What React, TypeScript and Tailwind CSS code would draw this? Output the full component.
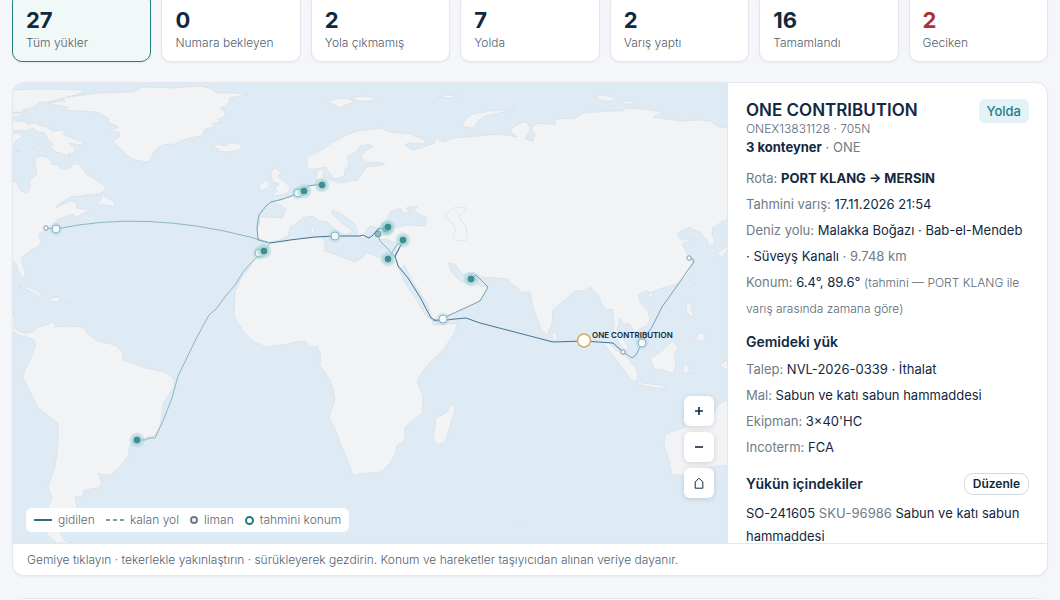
import type { ReactNode } from "react";

const stats = [
  { value: 27, label: "Tüm yükler", active: true },
  { value: 0, label: "Numara bekleyen" },
  { value: 2, label: "Yola çıkmamış" },
  { value: 7, label: "Yolda" },
  { value: 2, label: "Varış yaptı" },
  { value: 16, label: "Tamamlandı" },
  { value: 2, label: "Geciken", late: true },
];

const land = [
  // Arctic Canada
  "12,90 40,89 85,90 78,94 67,97 58,99 52,101 38,103 34,107 22,110 27,112 12,112",
  "12,114 20,113 25,115 12,117",
  "12,119 18,122 25,121 27,124 38,123 40,126 47,127 52,131 66,130 63,134 72,138 83,142 82,145 74,144 69,143 75,149 74,154 68,153 70,156 63,154 57,152 50,148 53,144 48,139 44,133 37,132 34,128 26,131 22,130 12,131",
  "12,133 20,133 22,137 16,141 12,149",
  "37,138 42,138 40,141",
  "33,148 44,148 41,151",
  "12,150 20,151 12,152",
  // North America
  "12,182 17,182 20,190 27,193 31,186 29,180 34,177 37,173 35,164 35,158 41,156 50,158 52,164 58,165 60,168 67,170 73,165 78,163 84,170 87,175 95,179 106,187 105,191 98,194 85,195 78,197 72,196 67,199 59,204 55,208 64,204 71,201 76,202 77,208 82,209 90,209 85,213 76,217 73,214 65,217 58,219 54,225 50,228 44,231 39,234 41,242 38,247 31,250 22,257 22,263 25,272 25,278 22,277 18,270 17,264 12,260",
  "104,193 106,198 112,200 115,203 114,208 109,205 97,205 100,201",
  "18,286 28,287 35,290 43,295 38,296 33,292",
  "50,298 57,297 62,300 56,302 51,301",
  "67,301 71,301 71,303 67,302",
  // Greenland
  "48,104 60,101 65,102 63,98 97,93 133,92 143,87 175,88 200,86 212,89 217,93 235,93 248,94 230,98 229,102 226,106 220,108 225,112 224,117 217,119 222,122 212,123 215,127 205,129 203,135 195,137 182,140 175,144 163,145 157,148 153,153 151,159 147,162 140,161 132,159 127,155 120,148 117,146 113,141 120,136 119,132 110,131 118,127 115,125 107,123 109,120 108,118 97,112 80,111 63,110 68,107",
  "212,147 217,144 225,146 230,143 238,143 243,147 238,150 228,152 216,151 219,149",
  // Eurasia and Africa
  "268,242 262,240 258,238 257,230 260,222 259,217 267,217 282,218 286,210 281,205 271,202 282,200 284,196 290,197 298,192 305,189 308,186 316,184 317,172 322,168 324,177 330,180 340,183 350,181 357,180 362,174 366,167 383,165 385,163 366,162 361,157 366,150 373,147 370,144 360,146 357,151 347,157 349,164 345,170 344,176 335,179 331,176 326,167 320,168 310,170 307,166 307,157 320,151 330,144 345,136 357,131 380,128 390,132 410,134 425,140 424,144 408,143 405,145 412,150 420,148 435,143 435,137 443,142 453,138 480,136 500,134 517,137 510,130 515,126 523,122 528,123 530,130 525,139 533,141 535,134 531,128 538,123 555,125 555,119 575,118 583,113 610,111 622,111 627,108 645,109 663,112 653,117 680,121 700,120 711,121 715,125 722,128 728,127 728,219 720,223 713,228 712,233 715,243 708,247 708,240 704,238 700,232 694,230 690,227 683,230 677,234 682,240 692,239 687,242 682,244 688,255 692,263 690,271 683,280 675,285 665,287 657,290 652,292 645,291 638,295 640,302 648,311 650,319 647,326 641,328 635,333 632,327 628,323 624,325 620,318 617,328 618,336 623,338 628,347 628,352 622,347 616,337 613,333 614,322 612,309 607,310 603,307 598,295 590,287 584,291 575,291 567,298 553,310 552,324 547,335 542,330 536,316 533,308 530,292 522,293 518,288 511,284 508,279 495,278 480,277 475,273 462,274 455,264 448,263 452,272 460,281 468,284 475,279 477,284 488,288 483,297 474,305 458,312 443,319 433,321 433,325 457,323 455,332 443,350 428,364 419,377 417,382 423,396 422,413 410,423 405,427 405,440 397,445 395,455 387,467 380,472 353,475 350,467 345,454 340,443 337,433 329,418 331,411 335,400 333,389 330,380 320,365 321,355 317,346 310,347 305,341 295,342 283,345 265,347 253,341 245,333 237,322 234,315 235,292 242,277 250,267 255,257 262,248",
  "275,168 281,172 278,177 283,181 290,187 288,193 280,195 272,196 277,191 275,187 279,184 273,182 271,176 272,170",
  "260,185 265,180 270,182 268,188 259,191",
  "327,102 335,99 347,98 355,102 345,105 340,108 334,105",
  "350,98 363,96 377,98 371,101 360,101",
  "438,97 448,95 458,96 449,98",
  "462,125 467,118 473,114 490,111 515,109 500,113 485,116 478,121 474,128 466,127",
  "593,97 603,95 612,97 618,101 605,101",
  "620,101 630,101 635,104 624,104",
  // South America
  "12,310 15,318 14,328 20,332 25,333 33,332 38,327 46,325 54,322 55,327 67,326 83,327 87,333 97,341 115,345 122,352 123,360 130,362 145,368 160,371 167,373 174,379 174,387 168,396 163,403 162,415 160,425 155,435 145,438 133,440 129,448 129,455 120,467 110,475 104,475 98,473 102,483 98,488 84,490 83,496 75,497 77,507 71,515 69,525 60,532 64,540 72,543 56,543 47,534 50,520 48,507 52,498 48,487 55,467 58,445 58,423 48,415 38,408 31,393 23,378 25,370 30,360 35,347 34,340 25,336 20,336 12,330",
  // Islands
  "453,402 455,410 451,423 445,442 437,445 433,436 435,427 436,418 446,413",
  "553,330 558,338 554,342 552,336",
  "602,342 609,343 616,350 626,357 636,368 638,375 636,382 630,378 621,366 612,354",
  "638,382 650,384 660,385 667,389 650,387 638,384",
  "650,358 655,356 663,350 672,341 678,347 674,356 676,364 673,373 662,370 654,369",
  "683,362 688,366 692,363 688,369 692,374 687,372 683,375 684,368",
  "687,303 691,302 691,309 695,318 689,315 686,311",
  "696,336 702,332 705,337 703,342 698,340",
  "690,280 689,287 686,284",
  "648,294 653,293 651,300",
  "718,252 722,250 728,246 728,249 722,257 718,255",
  "728,360 722,363 720,366 728,370",
  "728,401 722,402 717,407 713,415 706,419 696,420 683,428 670,432 665,436 664,446 669,460 672,475 682,475 696,469 712,467 728,465",
  "516,524 521,524 518,526",
];

const water = [
  // Mediterranean
  "270,242 280,240 288,236 290,227 298,222 302,218 312,216 320,221 327,222 340,233 347,235 353,231 342,223 332,214 332,210 340,213 355,224 358,235 365,240 366,230 371,226 379,228 378,240 386,239 393,242 397,243 395,257 387,260 367,253 362,258 355,262 337,255 325,251 325,243 323,237 300,238 285,242",
  // Black Sea
  "383,228 387,222 390,212 400,208 403,213 410,213 406,208 418,206 413,211 427,218 425,226 407,225 393,228",
  // Red Sea
  "396,261 401,269 404,265 413,282 428,305 433,321 425,315 415,297 410,291 403,279",
];

const caspian = "445,215 453,208 465,207 466,212 458,216 463,223 466,226 467,240 458,241 453,236 456,229";

const routes = [
  { d: "M46 228L56 229Q145 210 250 237L270 243", tone: "light" },
  { d: "M137 440L145 440L149 438L155 438L163 421L172 398L178 376L197 337L209 315L216 309L225 297L235 285L243 272L251 263L264 251L270 243", tone: "light" },
  { d: "M270 243L258 240L257 227L259 215L266 206L271 202L283 199L297 194L304 190L308 186L322 184", tone: "mid" },
  { d: "M378 234L380 241L387 248L395 257L403 241M388 259L396 246L403 241", tone: "light" },
  { d: "M471 279L476 275L488 287L480 301L465 308L443 318L433 321", tone: "mid" },
  { d: "M623 352L632 358L636 355L642 343L653 325L662 307L677 286L688 270L694 262L693 259L689 258", tone: "mid" },
  { d: "M270 243L290 240L315 237L335 236L360 236L363 235L369 238L372 236L378 229L388 227", tone: "dark" },
  { d: "M403 241L395 256L398 266L408 278L420 297L431 318L437 321L455 319L466 318L480 323L553 342L584 341L613 343L623 352", tone: "dark" },
];

const routeClass: Record<string, string> = {
  light: "stroke-[#8db5c4]",
  mid: "stroke-[#78a3b4]",
  dark: "stroke-[#417690]",
};

const vessels = [[304, 191], [322, 185], [264, 251], [386, 229], [388, 227], [403, 240], [388, 259], [471, 279], [137, 440]];
const waiting = [[56, 229], [335, 236], [443, 319], [642, 343], [259, 253], [298, 193]];
const ports = [[46, 228], [623, 352], [689, 258]];

function WorldMap() {
  return (
    <svg
      viewBox="13 83 714 460"
      preserveAspectRatio="xMidYMid slice"
      className="block h-full w-full"
      role="img"
      aria-label="Gemi haritası"
    >
      <g className="fill-[#f2f3f5] stroke-[#d5dce5]" strokeWidth="0.6" strokeLinejoin="round">
        {land.map((points) => (
          <polygon key={points} points={points} />
        ))}
        {water.map((points) => (
          <polygon key={points} points={points} className="fill-[#deebf4]" />
        ))}
        <polygon points={caspian} />
        <polygon points="311,227 314,227 314,234 311,234" />
        <polygon points="329,239 338,238 336,242" />
        <polygon points="374,247 382,247 378,249" />
      </g>
      <g fill="none" strokeLinejoin="round">
        {routes.map((route) => (
          <path key={route.d} d={route.d} className={routeClass[route.tone]} strokeWidth="1" />
        ))}
      </g>
      {waiting.map(([x, y]) => (
        <g key={`${x}-${y}`}>
          <circle cx={x} cy={y} r="6.5" className="fill-[#a9d3d9]/40" />
          <circle cx={x} cy={y} r="4" className="fill-[#f3fafb] stroke-[#86b4c0]" />
        </g>
      ))}
      <circle cx="378" cy="234" r="3" className="fill-[#8db9c4] stroke-[#5e9aa6]" />
      {vessels.map(([x, y]) => (
        <g key={`${x}-${y}`}>
          <circle cx={x} cy={y} r="7.5" className="fill-[#9ccfd3]/35" />
          <circle cx={x} cy={y} r="5.5" className="fill-[#9ccfd3]/50" />
          <circle cx={x} cy={y} r="3" className="fill-[#3f8f90] stroke-[#2f7d85]" strokeWidth="0.6" />
        </g>
      ))}
      {ports.map(([x, y]) => (
        <circle key={`${x}-${y}`} cx={x} cy={y} r="2.2" className="fill-white stroke-[#8494a6]" />
      ))}
      <circle cx="584" cy="340.5" r="6.5" className="fill-[#fffdf6] stroke-[#cfae72]" strokeWidth="1.5" />
      <text x="592" y="338" className="fill-[#12283f] text-[8px] font-semibold">
        ONE CONTRIBUTION
      </text>
    </svg>
  );
}

function Row({ label, children }: { label: string; children: ReactNode }) {
  return (
    <p>
      <span className="text-[#6f7b88]">{label}:</span> {children}
    </p>
  );
}

function MapButton({ label, children }: { label: string; children: ReactNode }) {
  return (
    <button
      type="button"
      aria-label={label}
      className="flex size-[30px] items-center justify-center rounded-md bg-white text-[#12283f] shadow-[0_1px_5px_rgba(18,40,63,0.16)]"
    >
      <svg viewBox="0 0 12 12" className="size-3" fill="none" stroke="currentColor">
        {children}
      </svg>
    </button>
  );
}

export default function App() {
  return (
    <main className="h-screen overflow-hidden bg-[#f5f6fa] px-3 font-['Inter',sans-serif] text-[#12283f]">
      <div className="-mt-2 grid grid-cols-7 gap-2.5">
        {stats.map((stat) => (
          <button
            key={stat.label}
            type="button"
            className={`rounded-[10px] border px-[13px] pt-[15px] pb-[9px] text-left shadow-[0_1px_2px_rgba(18,40,63,0.06)] ${
              stat.active ? "border-[#23827b] bg-[#f0f8f8]" : "border-[#e3e6ec] bg-white"
            }`}
          >
            <span className={`block text-[22px] leading-6 font-bold ${stat.late ? "text-[#ab3238]" : ""}`}>
              {stat.value}
            </span>
            <span className="mt-0.5 block text-xs leading-[18px] font-light text-[#52606f]">{stat.label}</span>
          </button>
        ))}
      </div>

      <section className="mt-5 overflow-hidden rounded-xl border border-[#e3e6ec] bg-white shadow-[0_1px_2px_rgba(18,40,63,0.06)]">
        <div className="grid h-[460px] grid-cols-[minmax(0,1fr)_320px]">
          <div className="relative h-[460px] overflow-hidden bg-[#deebf4]">
            <WorldMap />
            <div className="absolute right-[13px] bottom-[45px] flex flex-col gap-1.5">
              <MapButton label="Yakınlaştır">
                <path d="M6 2v8M2 6h8" strokeWidth="1.6" />
              </MapButton>
              <MapButton label="Uzaklaştır">
                <path d="M2 6h8" strokeWidth="1.6" />
              </MapButton>
              <MapButton label="Tüm harita">
                <path d="M2.2 11.2V5L6 1.2L9.8 5v6.2z" />
              </MapButton>
            </div>
            <div className="absolute bottom-[11px] left-[13px] flex items-center gap-[11px] rounded-md bg-white px-2 py-1 text-xs font-light text-[#5a6775]">
              <span className="flex items-center gap-1.5">
                <span className="w-[18px] border-t-2 border-[#2f6f7b]" />
                gidilen
              </span>
              <span className="flex items-center gap-1.5">
                <svg viewBox="0 0 18 2" className="h-0.5 w-[18px] stroke-[#7d9fac]">
                  <path d="M0 1h18" strokeWidth="2" strokeDasharray="4 3" />
                </svg>
                kalan yol
              </span>
              <span className="flex items-center gap-1.5">
                <span className="size-2 rounded-full border-2 border-[#6f7b88]" />
                liman
              </span>
              <span className="flex items-center gap-1.5">
                <span className="size-[9px] rounded-full border-2 border-[#1d7f78]" />
                tahmini konum
              </span>
            </div>
          </div>

          <aside className="overflow-hidden border-l border-[#e3e6ec] px-[18px] pt-4 text-sm">
            <div className="flex items-start justify-between">
              <h2 className="text-[17px] leading-[23px] font-semibold">ONE CONTRIBUTION</h2>
              <span className="rounded-md bg-[#e4f2f7] px-2 py-1 text-[13px] leading-4 font-medium text-[#1d7f84]">
                Yolda
              </span>
            </div>
            <p className="text-xs leading-3 font-light text-[#5a6775]">ONEX13831128 · 705N</p>
            <p className="text-[13px] leading-6">
              <strong className="font-bold">3 konteyner</strong> <span className="text-[#6f7b88]">· ONE</span>
            </p>

            <div className="mt-1.5 text-[13px] leading-[26px]">
              <Row label="Rota">
                <strong className="font-bold">PORT KLANG → MERSIN</strong>
              </Row>
              <Row label="Tahmini varış">17.11.2026 21:54</Row>
              <Row label="Deniz yolu">
                Malakka Boğazı · Bab-el-Mendeb · Süveyş Kanalı <span className="text-[#6f7b88]">· 9.748 km</span>
              </Row>
              <Row label="Konum">
                6.4°, 89.6°{" "}
                <span className="text-xs leading-none font-light text-[#5a6775]">
                  (tahmini — PORT KLANG ile varış arasında zamana göre)
                </span>
              </Row>
            </div>

            <h3 className="mt-[11px] leading-5 font-semibold">Gemideki yük</h3>
            <div className="mt-1 text-[13px] leading-[26px]">
              <Row label="Talep">NVL-2026-0339 · İthalat</Row>
              <Row label="Mal">Sabun ve katı sabun hammaddesi</Row>
              <Row label="Ekipman">3×40'HC</Row>
              <Row label="Incoterm">FCA</Row>
            </div>

            <div className="mt-[13px] flex items-center justify-between">
              <h3 className="leading-5 font-semibold">Yükün içindekiler</h3>
              <button
                type="button"
                className="rounded-[9px] border border-[#d3d9e2] bg-white px-2 text-xs leading-5 font-semibold"
              >
                Düzenle
              </button>
            </div>
            <p className="mt-[7px] text-[13px] leading-[23px]">
              SO-241605 <span className="text-[#6f7b88]">SKU-96986</span> Sabun ve katı sabun hammaddesi
            </p>
          </aside>
        </div>
        <p className="border-t border-[#e3e6ec] px-3.5 pt-2 pb-[7px] text-xs leading-4 font-light text-[#52606f]">
          Gemiye tıklayın · tekerlekle yakınlaştırın · sürükleyerek gezdirin. Konum ve hareketler taşıyıcıdan alınan
          veriye dayanır.
        </p>
      </section>

      <section className="mt-[22px] h-10 rounded-xl border border-[#e3e6ec] bg-white" />
    </main>
  );
}
